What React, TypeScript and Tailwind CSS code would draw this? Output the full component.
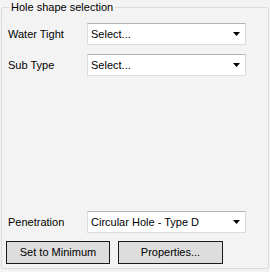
import React from "react";

function Arrow() {
  return (
    <svg width="7" height="4" viewBox="0 0 7 4" className="block">
      <path d="M0 0H7L3.5 4Z" fill="#000" />
    </svg>
  );
}

function Dropdown({ value }: { value: string }) {
  return (
    <div className="w-[159px] h-[22px] bg-white border border-[#dcdcdc] border-t-[#b4b4b4] flex items-center pl-[3px] pr-[5px]">
      <span className="flex-1 truncate">{value}</span>
      <Arrow />
    </div>
  );
}

function Row({ label, value }: { label: string; value: string }) {
  return (
    <div className="flex items-center pl-[6px]">
      <span className="w-[79px]">{label}</span>
      <Dropdown value={value} />
    </div>
  );
}

function Btn({ label, w }: { label: string; w: string }) {
  return (
    <button className={`${w} h-[23px] bg-[#dddddd] border border-[#1a1a1a] flex items-center justify-center`}>
      {label}
    </button>
  );
}

export default function App() {
  return (
    <div
      className="w-[270px] h-[272px] bg-[#f3f3f3] pt-[7px] pl-[1px] text-[11px] text-black"
      style={{ fontFamily: '"Liberation Sans", Arial, sans-serif' }}
    >
      <div className="relative w-[268px] h-[262px] border border-[#dcdcdc] rounded-[2px] flex flex-col pt-[15px] pb-[4px]">
        <span className="absolute left-[7px] -top-[8px] px-[2px] bg-[#f3f3f3] leading-[14px]">
          Hole shape selection
        </span>
        <div className="flex flex-col gap-[9px]">
          <Row label="Water Tight" value="Select..." />
          <Row label="Sub Type" value="Select..." />
        </div>
        <div className="flex-1" />
        <Row label="Penetration" value="Circular Hole - Type D" />
        <div className="flex gap-[8px] pl-[4px] mt-[8px]">
          <Btn label="Set to Minimum" w="w-[104px]" />
          <Btn label="Properties..." w="w-[105px]" />
        </div>
      </div>
    </div>
  );
}
